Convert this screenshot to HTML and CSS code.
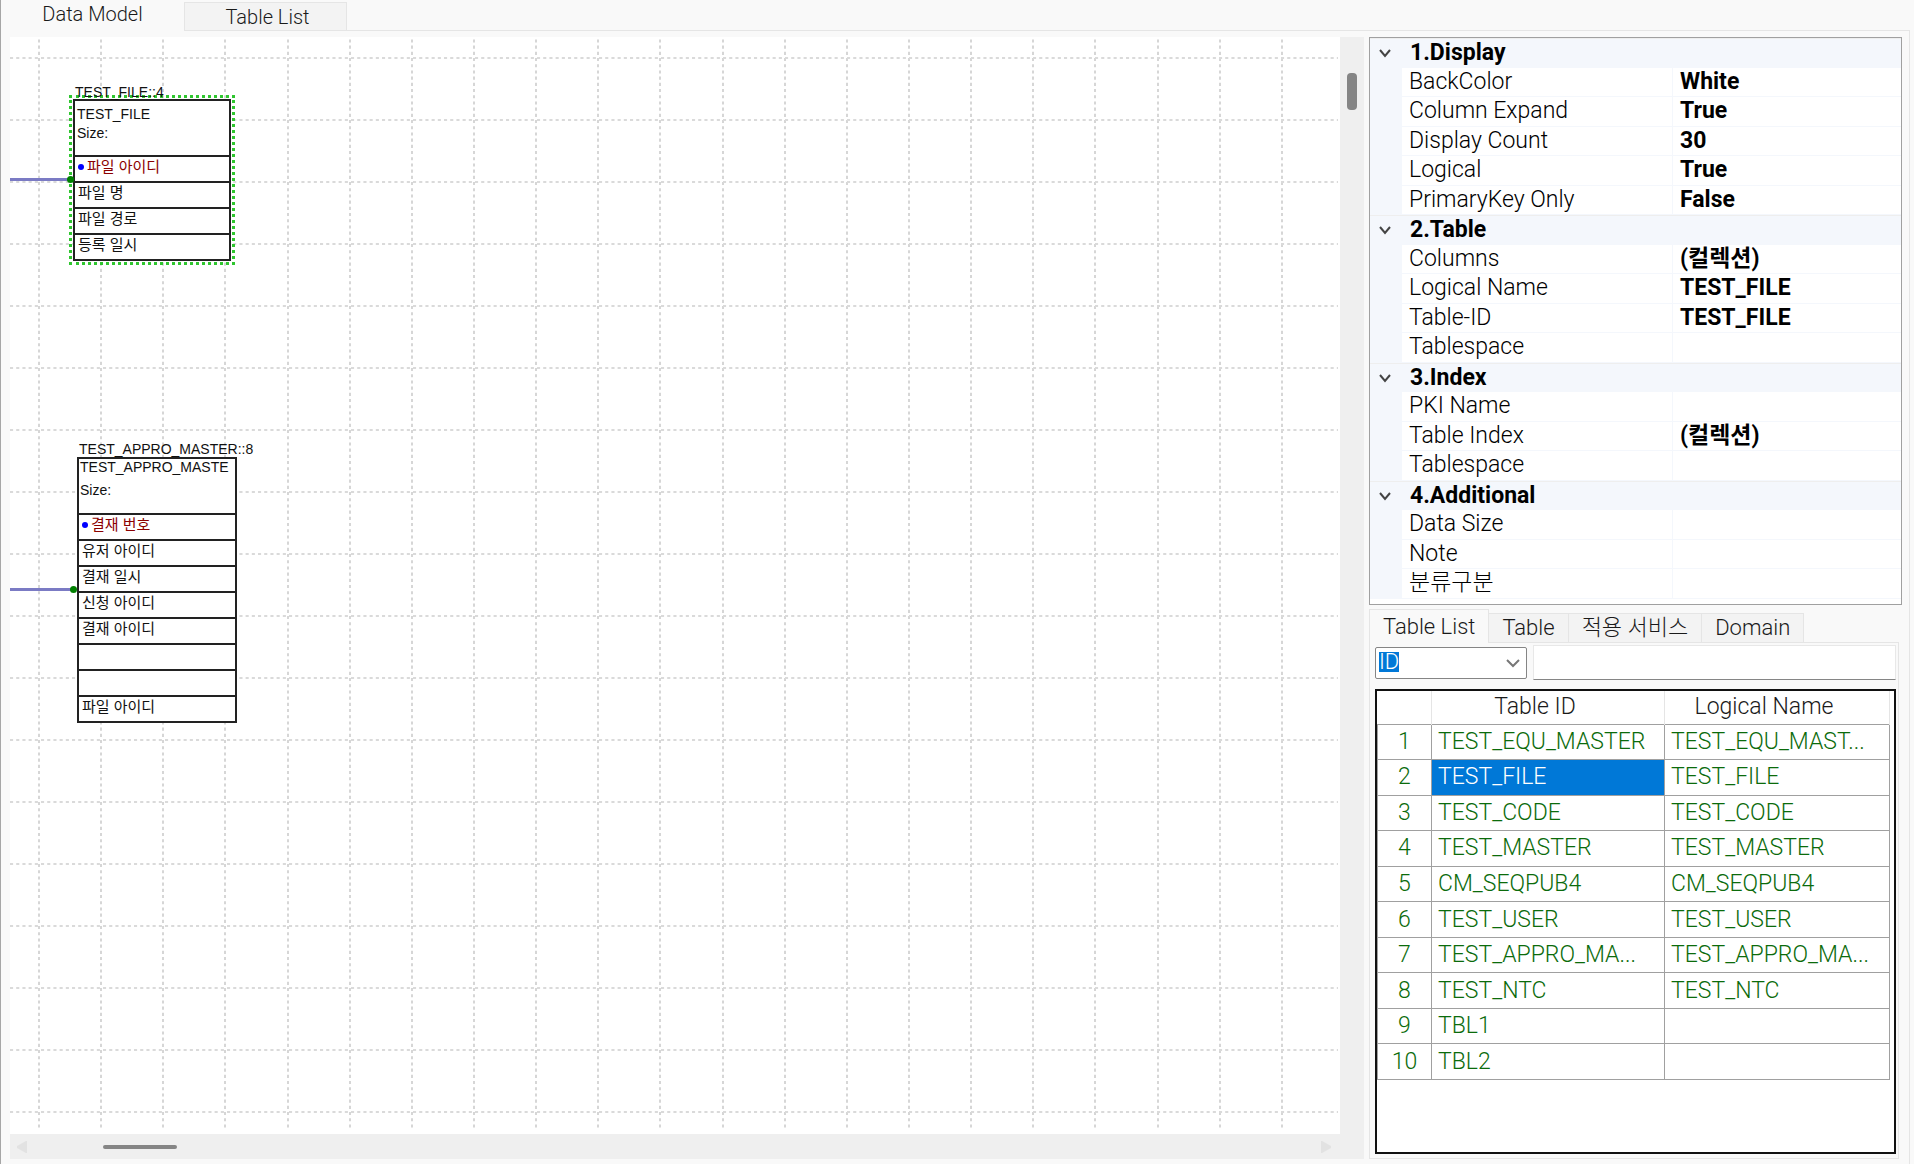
FILE: index.html
```html
<!DOCTYPE html>
<html lang="ko">
<head>
<meta charset="utf-8">
<title>Data Model</title>
<link rel="stylesheet" href="styles.css">
</head>
<body>
<div class="app">
  <nav class="main-tabs">
    <button type="button" class="main-tab main-tab-active">Data Model</button>
    <button type="button" class="main-tab">Table List</button>
    <span class="main-tabs-rest"></span>
  </nav>

  <main class="workspace">
    <section class="viewport" aria-label="Data Model">
      <div class="canvas">
        <svg class="canvas-grid" aria-hidden="true">
          <defs>
            <pattern id="columns" x="28" y="-41" width="435" height="62" patternUnits="userSpaceOnUse">
              <g stroke="#d6d6d6" stroke-width="2" stroke-dasharray="1 1">
                <path pathLength="20" d="M1 0V62"/>
                <path pathLength="20" d="M63 0V62"/>
                <path pathLength="20" d="M125 0V62"/>
                <path pathLength="20" d="M187 0V62"/>
                <path pathLength="20" d="M250 0V62"/>
                <path pathLength="20" d="M312 0V62"/>
                <path pathLength="20" d="M374 0V62"/>
              </g>
            </pattern>
            <pattern id="rows" x="0" y="20" width="62" height="62" patternUnits="userSpaceOnUse">
              <path pathLength="20" d="M0 1H62" stroke="#dadada" stroke-width="2" stroke-dasharray="1 1"/>
            </pattern>
          </defs>
          <rect width="100%" height="100%" fill="url(#columns)"/>
          <rect width="100%" height="100%" fill="url(#rows)"/>
        </svg>

        <article class="entity entity-file entity-selected">
          <h2 class="entity-tag">TEST_FILE::4</h2>
          <header class="entity-head"><p>TEST_FILE</p><p>Size:</p></header>
          <ul class="entity-columns">
            <li class="key">파일 아이디</li>
            <li>파일 명</li>
            <li>파일 경로</li>
            <li>등록 일시</li>
          </ul>
        </article>

        <article class="entity entity-approval">
          <h2 class="entity-tag">TEST_APPRO_MASTER::8</h2>
          <header class="entity-head"><p>TEST_APPRO_MASTE</p><p>Size:</p></header>
          <ul class="entity-columns">
            <li class="key">결재 번호</li>
            <li>유저 아이디</li>
            <li>결재 일시</li>
            <li>신청 아이디</li>
            <li>결재 아이디</li>
            <li></li>
            <li></li>
            <li>파일 아이디</li>
          </ul>
        </article>

        <span class="link link-file"></span>
        <span class="link link-approval"></span>
      </div>
      <div class="scroll-y"><span class="thumb-y"></span></div>
      <div class="scroll-x">
        <svg width="10" height="12" viewBox="0 0 10 12" aria-hidden="true"><path d="M9 0h1v12h-1L0 7V5z" fill="#e2e2e2"/></svg>
        <span class="thumb-x"></span>
        <svg class="arrow-end" width="10" height="12" viewBox="0 0 10 12" aria-hidden="true"><path d="M0 0h1l9 5v2l-9 5H0z" fill="#e2e2e2"/></svg>
      </div>
    </section>

    <aside class="side">
      <div class="props">
        <h3 class="cat"><svg class="chevron" viewBox="0 0 14 9"><path d="M2 1l5 6 5-6"/></svg>1.Display</h3>
        <div class="prop"><span>BackColor</span><b>White</b></div>
        <div class="prop"><span>Column Expand</span><b>True</b></div>
        <div class="prop"><span>Display Count</span><b>30</b></div>
        <div class="prop"><span>Logical</span><b>True</b></div>
        <div class="prop"><span>PrimaryKey Only</span><b>False</b></div>
        <h3 class="cat"><svg class="chevron" viewBox="0 0 14 9"><path d="M2 1l5 6 5-6"/></svg>2.Table</h3>
        <div class="prop"><span>Columns</span><b>(컬렉션)</b></div>
        <div class="prop"><span>Logical Name</span><b>TEST_FILE</b></div>
        <div class="prop"><span>Table-ID</span><b>TEST_FILE</b></div>
        <div class="prop"><span>Tablespace</span><b></b></div>
        <h3 class="cat"><svg class="chevron" viewBox="0 0 14 9"><path d="M2 1l5 6 5-6"/></svg>3.Index</h3>
        <div class="prop"><span>PKI Name</span><b></b></div>
        <div class="prop"><span>Table Index</span><b>(컬렉션)</b></div>
        <div class="prop"><span>Tablespace</span><b></b></div>
        <h3 class="cat"><svg class="chevron" viewBox="0 0 14 9"><path d="M2 1l5 6 5-6"/></svg>4.Additional</h3>
        <div class="prop"><span>Data Size</span><b></b></div>
        <div class="prop"><span>Note</span><b></b></div>
        <div class="prop"><span>분류구분</span><b></b></div>
      </div>

      <div class="lists">
        <nav class="sub-tabs">
          <button type="button" class="sub-tab sub-tab-active">Table List</button>
          <button type="button" class="sub-tab">Table</button>
          <button type="button" class="sub-tab">적용 서비스</button>
          <button type="button" class="sub-tab">Domain</button>
          <span class="sub-tabs-rest"></span>
        </nav>
        <div class="sub-panel">
          <div class="filter">
            <div class="combo">
              <select class="combo-select" aria-label="Search field"><option>ID</option></select>
              <svg class="combo-arrow" viewBox="0 0 14 9"><path d="M1 1l6 6 6-6"/></svg>
            </div>
            <input class="filter-text" type="text" aria-label="Search text">
          </div>
          <div class="table-frame">
            <table class="tables">
              <colgroup><col class="col-no"><col class="col-id"><col class="col-name"></colgroup>
              <thead><tr><th></th><th>Table ID</th><th>Logical Name</th></tr></thead>
              <tbody>
                <tr><td>1</td><td>TEST_EQU_MASTER</td><td>TEST_EQU_MAST...</td></tr>
                <tr><td>2</td><td class="selected">TEST_FILE</td><td>TEST_FILE</td></tr>
                <tr><td>3</td><td>TEST_CODE</td><td>TEST_CODE</td></tr>
                <tr><td>4</td><td>TEST_MASTER</td><td>TEST_MASTER</td></tr>
                <tr><td>5</td><td>CM_SEQPUB4</td><td>CM_SEQPUB4</td></tr>
                <tr><td>6</td><td>TEST_USER</td><td>TEST_USER</td></tr>
                <tr><td>7</td><td>TEST_APPRO_MA...</td><td>TEST_APPRO_MA...</td></tr>
                <tr><td>8</td><td>TEST_NTC</td><td>TEST_NTC</td></tr>
                <tr><td>9</td><td>TBL1</td><td></td></tr>
                <tr><td>10</td><td>TBL2</td><td></td></tr>
              </tbody>
            </table>
          </div>
        </div>
      </div>
    </aside>
  </main>
</div>
</body>
</html>
```
FILE: styles.css
```css
* { box-sizing: border-box; }

body {
  margin: 0;
  background: #f9f9f9;
  color: #1a1a1a;
  font: 300 23px/28px Roboto, "Noto Sans CJK KR", sans-serif;
}

button, input, select { font: inherit; color: inherit; }
h2, h3, p, ul { margin: 0; padding: 0; font-size: inherit; font-weight: inherit; }
ul { list-style: none; }

.app {
  display: flex;
  flex-direction: column;
  min-height: 100vh;
  border-left: 1px solid #a6a6a6;
}

/* Main tabs */
.main-tabs { display: flex; height: 31px; }
.main-tab {
  width: 163px;
  padding: 0 0 0 4px;
  margin-top: 2px;
  border: 1px solid #e5e5e5;
  background: #f3f3f3;
  font-size: 20px;
  line-height: 26px;
}
.main-tab-active {
  width: 183px;
  margin-top: 0;
  padding: 0 0 4px;
  border: 0;
  background: none;
}
.main-tabs-rest { flex: 1; margin-right: 4px; border-bottom: 1px solid #e5e5e5; }

.workspace {
  flex: 1;
  display: flex;
  gap: 5px;
  margin-right: 4px;
  padding: 6px 7px 5px 9px;
  border-right: 1px solid #e5e5e5;
}

/* Diagram */
.viewport {
  flex: 1;
  display: grid;
  grid-template-columns: 1fr 24px;
  grid-template-rows: 1fr 25px;
  background: #efefef;
}
.canvas { position: relative; overflow: hidden; background: #fff; }
.canvas-grid { position: absolute; inset: 0 2px 4px 0; width: calc(100% - 2px); height: calc(100% - 4px); }
.scroll-y { padding: 36px 7px 0; }
.thumb-y { display: block; width: 10px; height: 37px; border-radius: 4px; background: #858585; }
.scroll-x { display: flex; align-items: center; grid-column: 1; padding: 0 9px 0 7px; }
.thumb-x { width: 74px; height: 4px; margin-left: 76px; border-radius: 2px; background: #858585; }
.arrow-end { margin-left: auto; }

.entity {
  position: absolute;
  border: 2px solid #222;
  background: #fff;
  color: #111;
  font: 14px/20px "Liberation Sans", "Noto Sans CJK KR", sans-serif;
}
.entity-file { left: 63px; top: 62px; width: 158px; }
.entity-approval { left: 67px; top: 420px; width: 160px; }
.entity-selected { outline: 3px dotted #2fc62f; outline-offset: 1px; }
.entity-tag { position: absolute; left: 0; bottom: 100%; white-space: nowrap; line-height: 18px; }
.entity-approval .entity-tag { line-height: 20px; }
.entity-head { height: 54px; padding: 3px 2px; }
.entity-approval .entity-head { padding: 0 1px; }
.entity-head p { height: 19px; line-height: 20px; white-space: nowrap; }
.entity-approval .entity-head p { height: 21px; line-height: 17px; }
.entity-approval .entity-head p + p { line-height: 20px; }
.entity-columns { font-size: 15px; }
.entity-columns li { height: 26px; padding-left: 3px; border-top: 2px solid #222; line-height: 19px; }
.entity-columns .key { display: flex; gap: 3px; color: #8b0000; }
.key::before { content: ""; width: 6px; height: 6px; margin-top: 7px; border-radius: 50%; background: #00f; }

.link { position: absolute; left: 0; height: 3px; background: #7b7bc4; }
.link::after { content: ""; position: absolute; right: -4px; top: -2px; width: 7px; height: 7px; border-radius: 50%; background: #008000; }
.link-file { top: 141px; width: 60px; }
.link-approval { top: 551px; width: 63px; }

/* Right side */
.side {
  flex: 0 0 533px;
  display: grid;
  grid-template-rows: 568fr 554fr;
}
.props {
  display: grid;
  grid-auto-rows: minmax(28px, 1fr);
  padding-bottom: 5px;
  border: 1px solid #a0a0a0;
  background: #fff;
  color: #000;
}
.cat {
  display: flex;
  align-items: center;
  gap: 18px;
  padding-left: 8px;
  border-top: 1px solid #eee;
  background: #f4f7fc;
  font-weight: 700;
}
.chevron { width: 14px; height: 9px; fill: none; stroke: #444; stroke-width: 2; }
.prop {
  display: grid;
  grid-template-columns: 271px 1fr;
  border-left: 32px solid #f4f7fc;
  border-bottom: 1px solid #f4f7fc;
}
.prop span { padding-left: 7px; border-right: 1px solid #f4f7fc; }
.prop b { padding-left: 7px; font-weight: 700; }

/* Lists */
.lists { display: flex; flex-direction: column; padding: 4px 3px 0 0; }
.sub-tabs { display: flex; height: 34px; font-size: 22px; }
.sub-tab {
  margin-top: 4px;
  padding: 0 13px;
  border: 1px solid #e5e5e5;
  border-left-width: 0;
  background: #f3f3f3;
  line-height: 26px;
}
.sub-tab-active { margin: 0; border-width: 1px 1px 0; background: #f9f9f9; }
.sub-tabs-rest { flex: 1; border-bottom: 1px solid #e5e5e5; }
.sub-panel {
  flex: 1;
  display: flex;
  flex-direction: column;
  gap: 9px;
  padding: 2px 2px 4px 5px;
  border: 1px solid #e5e5e5;
  border-top: 0;
}
.filter { display: flex; gap: 6px; height: 35px; font-size: 22px; }
.combo { position: relative; width: 152px; padding: 2px 0 1px; }
.combo-select {
  width: 100%;
  height: 32px;
  padding: 0 0 2px 3px;
  border: 1px solid #858585;
  border-radius: 2px;
  appearance: none;
  background: linear-gradient(#0078d7, #0078d7) 3px 4px / 20px 20px no-repeat #fff;
  color: #fff;
}
.combo-arrow { position: absolute; right: 7px; top: 14px; width: 14px; height: 9px; fill: none; stroke: #777; stroke-width: 2; pointer-events: none; }
.filter-text { flex: 1; min-width: 0; border: 1px solid #e8e8e8; border-bottom: 1px solid #858585; background: #fff; }

.table-frame { flex: 1; padding-right: 4px; border: 2px solid #111; background: #fff; }
.tables { width: 100%; height: 389px; table-layout: fixed; border-collapse: collapse; color: #0b6b0b; }
.col-no { width: 54px; }
.col-id { width: 233px; }
.tables th { height: 33px; padding: 0 26px 0 0; border-right: 1px solid #e5e5e5; color: #1a1a1a; font-weight: 300; }
.tables td { padding: 0 0 0 6px; border: 1px solid #a0a0a0; white-space: nowrap; overflow: hidden; }
.tables td:first-child { padding: 0; text-align: center; }
.tables .selected { background: #0078d7; color: #fff; }
```
